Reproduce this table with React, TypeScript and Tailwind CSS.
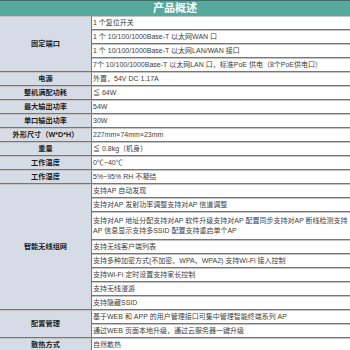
import React from 'react';

type Row = { label?: string; span?: number; text: React.ReactNode; tall?: boolean };

const rows: Row[] = [
  { label: '固定端口', span: 4, text: '1 个复位开关' },
  { text: '1 个 10/100/1000Base-T 以太网WAN 口' },
  { text: '1 个 10/100/1000Base-T 以太网LAN/WAN 接口' },
  { text: '7个 10/100/1000Base-T 以太网LAN 口，标准PoE 供电（8个PoE供电口）' },
  { label: '电源', span: 1, text: '外置，54V DC 1.17A' },
  { label: '整机满配功耗', span: 1, text: '≦ 64W' },
  { label: '最大输出功率', span: 1, text: '54W' },
  { label: '单口输出功率', span: 1, text: '30W' },
  { label: '外形尺寸（W*D*H）', span: 1, text: '227mm×74mm×23mm' },
  { label: '重量', span: 1, text: '≦ 0.8kg（机身）' },
  { label: '工作温度', span: 1, text: '0℃~40℃' },
  { label: '工作湿度', span: 1, text: '5%~95% RH 不凝结' },
  { label: '智能无线组网', span: 8, text: '支持AP 自动发现' },
  { text: '支持对AP 发射功率调整支持对AP 信道调整' },
  {
    tall: true,
    text: (
      <>
        支持对AP 地址分配支持对AP 软件升级支持对AP 配置同步支持对AP 断线检测支持
        <br />
        AP 信息显示支持多SSID 配置支持重启单个AP
      </>
    ),
  },
  { text: '支持无线客户端列表' },
  { text: '支持多种加密方式(不加密、WPA、WPA2) 支持Wi-Fi 接入控制' },
  { text: '支持Wi-Fi 定时设置支持家长控制' },
  { text: '支持无线漫游' },
  { text: '支持隐藏SSID' },
  { label: '配置管理', span: 2, text: '基于WEB 和 APP 的用户管理接口可集中管理智能终端系列 AP' },
  { text: '通过WEB 页面本地升级，通过云服务器一键升级' },
  { label: '散热方式', span: 1, text: '自然散热' },
];

const cell = 'p-0 border-t border-t-[#c4c4c4] border-b border-b-[#777777]';

export default function App() {
  return (
    <div className="w-[350px] h-[350px] overflow-hidden bg-white font-['Liberation_Sans','Noto_Sans_CJK_SC',sans-serif]">
      <table className="w-[350px] table-fixed border-separate border-spacing-0">
        <colgroup>
          <col className="w-[92px]" />
          <col className="w-[258px]" />
        </colgroup>
        <tbody>
          <tr>
            <td
              colSpan={2}
              className="h-[16px] p-0 border-t border-t-[#3f6f69] bg-[#58a99d] text-center text-[11px] leading-[15px] font-bold text-white"
            >
              产品概述
            </td>
          </tr>
          {rows.map((r, i) => (
            <tr key={i}>
              {r.label && (
                <td
                  rowSpan={r.span}
                  className={`${cell} border-r border-r-[#777777] bg-[#d5dce5] text-center align-middle text-[7.2px] leading-[10px] font-bold text-[#1c1c1c] whitespace-nowrap`}
                >
                  {r.label}
                </td>
              )}
              <td
                className={`${cell} ${r.tall ? 'h-[28px]' : 'h-[14px]'} pl-px align-middle text-[7px] leading-[10px] text-[#404040] whitespace-nowrap overflow-hidden`}
              >
                {r.text}
              </td>
            </tr>
          ))}
        </tbody>
      </table>
    </div>
  );
}
